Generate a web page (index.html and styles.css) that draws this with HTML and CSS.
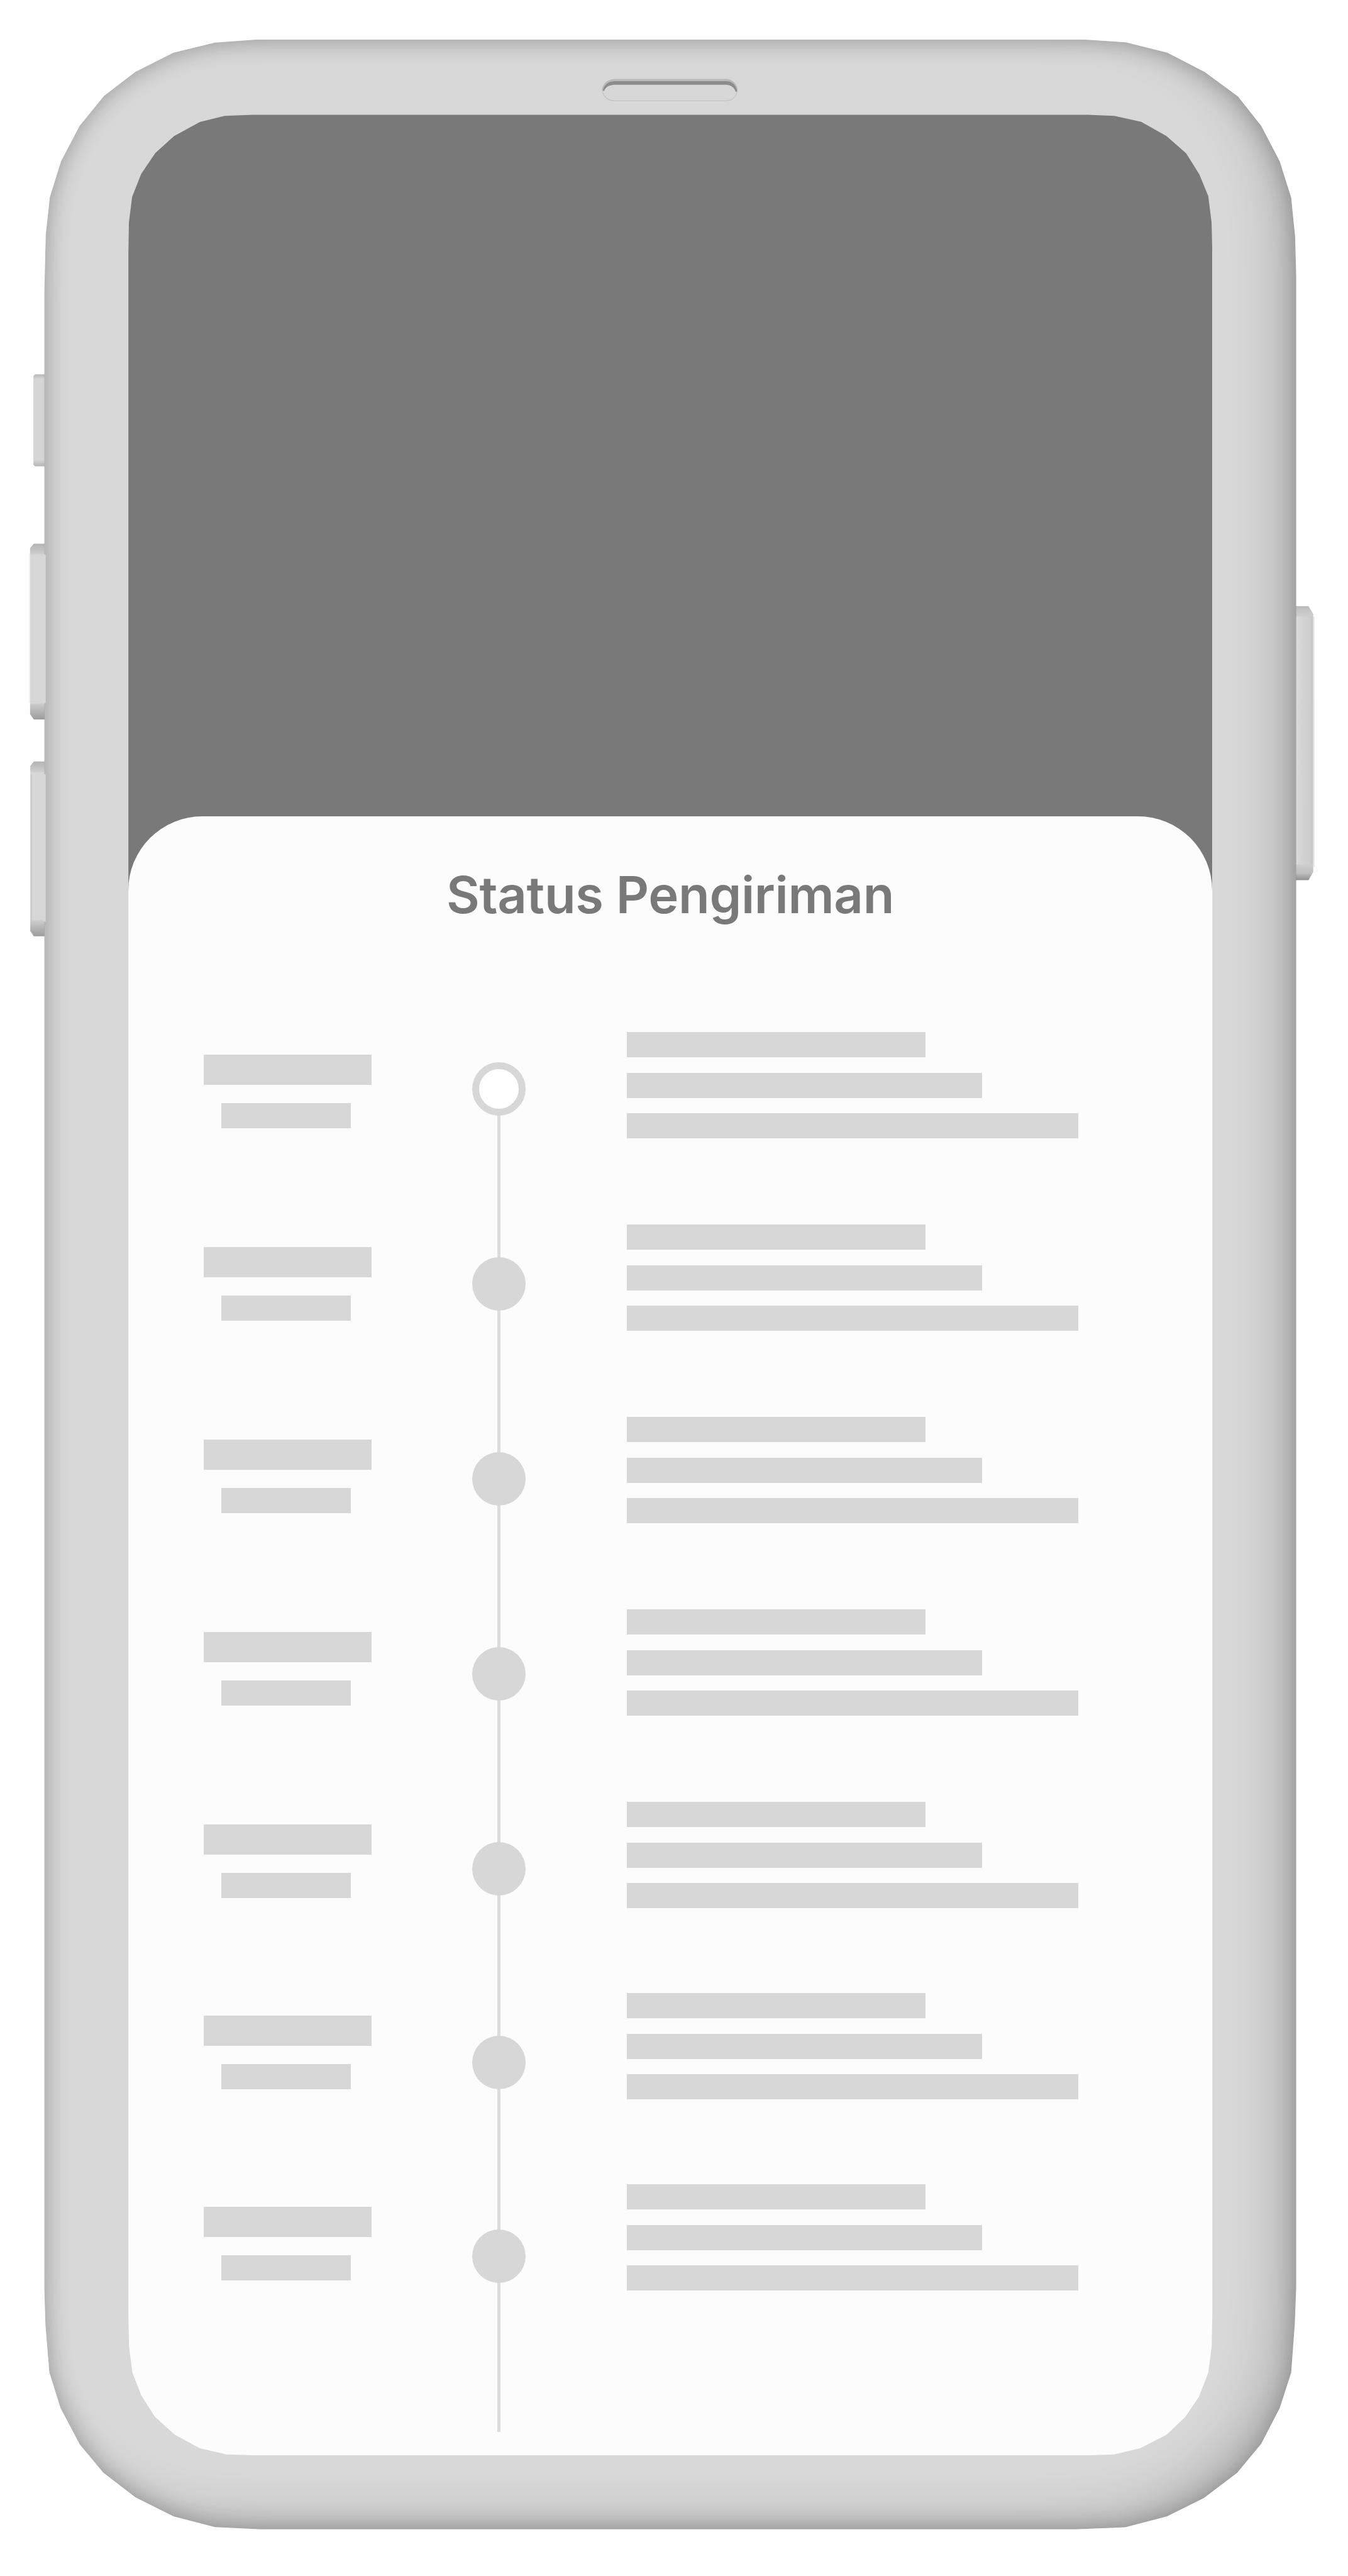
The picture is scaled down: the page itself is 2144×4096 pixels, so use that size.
FILE: index.html
```html
<!DOCTYPE html>
<html lang="id">
<head>
<meta charset="utf-8">
<title>Status Pengiriman</title>
<link rel="stylesheet" href="styles.css">
</head>
<body>
<div class="device">
  <main class="screen">
    <section class="sheet">
      <h1 class="title">Status Pengiriman</h1>
      <div class="timeline">
        <div class="dates">
          <div class="date"><i class="bar"></i><i class="bar time"></i></div>
          <div class="date"><i class="bar"></i><i class="bar time"></i></div>
          <div class="date"><i class="bar"></i><i class="bar time"></i></div>
          <div class="date"><i class="bar"></i><i class="bar time"></i></div>
          <div class="date"><i class="bar"></i><i class="bar time"></i></div>
          <div class="date"><i class="bar"></i><i class="bar time"></i></div>
          <div class="date"><i class="bar"></i><i class="bar time"></i></div>
        </div>
        <div class="track">
          <div class="step"><i class="dot current"></i></div>
          <div class="step"><i class="dot"></i></div>
          <div class="step"><i class="dot"></i></div>
          <div class="step"><i class="dot"></i></div>
          <div class="step"><i class="dot"></i></div>
          <div class="step"><i class="dot"></i></div>
          <div class="step"><i class="dot"></i></div>
        </div>
        <div class="details">
          <div class="detail"><i class="bar short"></i><i class="bar medium"></i><i class="bar long"></i></div>
          <div class="detail"><i class="bar short"></i><i class="bar medium"></i><i class="bar long"></i></div>
          <div class="detail"><i class="bar short"></i><i class="bar medium"></i><i class="bar long"></i></div>
          <div class="detail"><i class="bar short"></i><i class="bar medium"></i><i class="bar long"></i></div>
          <div class="detail"><i class="bar short"></i><i class="bar medium"></i><i class="bar long"></i></div>
          <div class="detail"><i class="bar short"></i><i class="bar medium"></i><i class="bar long"></i></div>
          <div class="detail"><i class="bar short"></i><i class="bar medium"></i><i class="bar long"></i></div>
        </div>
      </div>
    </section>
  </main>

  <svg class="frame" viewBox="0 0 2152 4112" preserveAspectRatio="none" aria-hidden="true">
    <defs>
      <path id="body" d="M408 63.3 L1733 63.3 L1797.5 67.5 L1863.6 84.2 L1923.3 115 L1976.5 154 L2013.5 201 L2043 257.5 L2061.3 315.5 L2067.6 378 L2069.3 440 L2069.3 3652 L2067 3711 L2061.3 3787.5 L2043 3844 L2013.5 3901 L1975 3947.3 L1922 3987.5 L1863 4017 L1796.5 4034.3 L1716 4037.5 L416 4037.5 L343 4034 L277.3 4017 L216 3986.3 L165 3947 L127.3 3902 L96.6 3843.7 L78.8 3787 L72.5 3711 L70.7 3652 L70.7 469 L73 375 L79.5 315 L97.4 257.5 L127 201 L166 153 L215.7 115 L277 84 L343 68 Z"/>
      <path id="outside" fill-rule="evenodd" d="M-400 -400 H2600 V4600 H-400 Z M408 63.3 L1733 63.3 L1797.5 67.5 L1863.6 84.2 L1923.3 115 L1976.5 154 L2013.5 201 L2043 257.5 L2061.3 315.5 L2067.6 378 L2069.3 440 L2069.3 3652 L2067 3711 L2061.3 3787.5 L2043 3844 L2013.5 3901 L1975 3947.3 L1922 3987.5 L1863 4017 L1796.5 4034.3 L1716 4037.5 L416 4037.5 L343 4034 L277.3 4017 L216 3986.3 L165 3947 L127.3 3902 L96.6 3843.7 L78.8 3787 L72.5 3711 L70.7 3652 L70.7 469 L73 375 L79.5 315 L97.4 257.5 L127 201 L166 153 L215.7 115 L277 84 L343 68 Z"/>
      <clipPath id="ring">
        <path clip-rule="evenodd" d="M408 63.3 L1733 63.3 L1797.5 67.5 L1863.6 84.2 L1923.3 115 L1976.5 154 L2013.5 201 L2043 257.5 L2061.3 315.5 L2067.6 378 L2069.3 440 L2069.3 3652 L2067 3711 L2061.3 3787.5 L2043 3844 L2013.5 3901 L1975 3947.3 L1922 3987.5 L1863 4017 L1796.5 4034.3 L1716 4037.5 L416 4037.5 L343 4034 L277.3 4017 L216 3986.3 L165 3947 L127.3 3902 L96.6 3843.7 L78.8 3787 L72.5 3711 L70.7 3652 L70.7 469 L73 375 L79.5 315 L97.4 257.5 L127 201 L166 153 L215.7 115 L277 84 L343 68 Z M404 183.3 L1736 183.3 L1779 185 L1822 194.6 L1862.4 217.4 L1893.6 244.6 L1914.8 278.5 L1928.9 313 L1934.2 355 L1935.4 404 L1935.4 3695 L1934.4 3746 L1928.8 3788 L1914 3826 L1892.3 3858 L1862.5 3886.4 L1820.5 3908 L1778.6 3918 L1737 3919.3 L404.7 3919.3 L361.7 3918 L318.6 3908 L279 3886.4 L247 3857.5 L225.6 3824 L211.4 3787.5 L206 3746 L205 3695 L205 402 L205.8 355 L211 314 L225.4 277.7 L248 244.2 L277.7 217.4 L319 194.8 L358.5 185 Z"/>
      </clipPath>
      <filter id="soft" filterUnits="userSpaceOnUse" x="-100" y="-100" width="2352" height="4312" color-interpolation-filters="sRGB"><feGaussianBlur stdDeviation="19"/></filter>
      <filter id="wide" filterUnits="userSpaceOnUse" x="-100" y="-100" width="2352" height="4312" color-interpolation-filters="sRGB"><feGaussianBlur stdDeviation="35"/></filter>
      <linearGradient id="keyA" x1="0" y1="0" x2="0" y2="1">
        <stop offset="0" stop-color="#b4b4b4"/><stop offset=".055" stop-color="#cbcbcb"/><stop offset=".065" stop-color="#d7d7d7"/>
        <stop offset=".905" stop-color="#d7d7d7"/><stop offset=".915" stop-color="#c9c9c9"/><stop offset="1" stop-color="#9c9c9c"/>
      </linearGradient>
      <linearGradient id="keyB" x1="0" y1="0" x2="0" y2="1">
        <stop offset="0" stop-color="#b8b8b8"/><stop offset=".05" stop-color="#d5d5d5"/>
        <stop offset=".93" stop-color="#d5d5d5"/><stop offset="1" stop-color="#b4b4b4"/>
      </linearGradient>
      <linearGradient id="power" x1="0" y1="0" x2="0" y2="1">
        <stop offset="0" stop-color="#b8b8b8"/><stop offset=".015" stop-color="#c5c5c5"/><stop offset=".045" stop-color="#d1d1d1"/>
        <stop offset=".94" stop-color="#d0d0d0"/><stop offset=".975" stop-color="#bdbdbd"/><stop offset="1" stop-color="#8f8f8f"/>
      </linearGradient>
      <linearGradient id="powerSide" x1="0" y1="0" x2="1" y2="0">
        <stop offset="0" stop-color="#fff" stop-opacity=".25"/><stop offset=".5" stop-color="#fff" stop-opacity="0"/><stop offset="1" stop-color="#000" stop-opacity=".06"/>
      </linearGradient>
    </defs>

    <path fill="url(#keyB)" d="M75 597.5 H56 L53.3 600 V742 L56 744.5 H75 Z"/>
    <path fill="url(#keyA)" d="M76 868 H54 L48 875 V1140 L54 1148.5 H76 Z"/>
    <path fill="#efefef" d="M46.5 884 H48.3 V1122 H46.5 Z"/>
    <path fill="url(#keyA)" d="M76 1215.5 H54 L48.3 1223 V1486 L54 1494.5 H76 Z"/>
    <path fill="#c9c9c9" d="M49 1236 H51 V1471 H49 Z"/>
    <path fill="url(#power)" d="M2064 967.5 H2089 L2096.5 980 V1392 L2089 1405 H2064 Z"/>
    <path fill="url(#powerSide)" d="M2069 984 H2096.5 V1380 H2069 Z"/>
    <path fill="#e4e4e4" d="M2096.5 984 H2098.5 V1384 H2096.5 Z"/>

    <g clip-path="url(#ring)">
      <use href="#body" fill="#d8d8d8"/>
      <use href="#outside" filter="url(#soft)" opacity=".28"/>
      <g filter="url(#wide)" opacity=".14"><use href="#outside" transform="translate(-40 -26)"/></g>
    </g>
    <path fill="#d7d7d7" d="M69 885 H73 V1122 H69 Z M69 1236 H73 V1471 H69 Z"/>

    <path fill="#d7d7d7" stroke="#c7c7c7" stroke-width="1.6" d="M980 127.5 H1160 C1170 128 1176.7 135 1176.7 144 C1176.7 153 1170 160.5 1160 160.8 H980 C970 160.5 961.8 153 961.8 144 C961.8 135 970 128 980 127.5 Z"/>
    <path fill="#b9b9b9" d="M961 144 C962 134 970 126.5 981 126 H1160 C1169 126.5 1177 134 1177.5 144 L1174 141 C1171 136 1166 134 1160 133 H981 C973 134 967 138 965 144 Z"/>
    <path fill="#8c8c8c" d="M962.5 145 C964 136 971 130 981 129.5 H1160 C1169 130 1175 136 1177 145.5 L1174.5 146.5 C1172 139 1167 136 1160 135.2 H981 C973 136 967 138 964.5 145 Z"/>
  </svg>
</div>
</body>
</html>
```
FILE: styles.css
```css
* {
  box-sizing: border-box;
}

body {
  margin: 0;
  background: #fff;
  font-family: Inter, "Liberation Sans", sans-serif;
}

/* The screen and the phone frame share one grid cell; the frame lies on top. */
.device {
  display: grid;
  width: 2144px;
  height: 4096px;
  overflow: hidden;
}

.screen,
.frame {
  grid-area: 1 / 1;
}

.frame {
  display: block;
  width: 2144px;
  height: 4096px;
}

.screen {
  width: 1724px;
  height: 3722px;
  margin: 182px 0 0 204px;
  padding-top: 1116px;
  background: #797979;
}

.sheet {
  height: 2606px;
  padding-top: 76px;
  border-radius: 118px 118px 0 0;
  background: #fcfcfc;
}

.title {
  margin: 0 0 169px;
  color: #797979;
  font-size: 81.3px;
  font-weight: 600;
  line-height: 98px;
  letter-spacing: -0.35px;
  text-align: center;
  white-space: nowrap;
}

.timeline {
  display: flex;
  align-items: flex-start;
  padding-left: 120px;
}

.bar {
  display: block;
  height: 40px;
  background: #d7d7d7;
}

.dates {
  width: 267px;
  padding-top: 36px;
}

.date {
  display: flex;
  flex-direction: column;
  gap: 29px;
  height: 306px;
}

.date .bar {
  height: 48px;
}

.date .time {
  width: 206px;
  height: 40px;
  margin-left: 28px;
}

.track {
  width: 86px;
  height: 2178px;
  margin: 48px 160px 0;
  background: linear-gradient(#dcdcdc, #dcdcdc) 40px 40px / 5px 100% no-repeat;
}

.step {
  height: 310px;
}

.dot {
  display: block;
  width: 85.4px;
  height: 85.4px;
  border-radius: 50%;
  background: #d7d7d7;
}

.dot.current {
  border: 11.5px solid #d7d7d7;
  background: #fefefe;
}

.detail {
  display: flex;
  flex-direction: column;
  gap: 24.3px;
  height: 306px;
}

.detail .bar {
  height: 40.3px;
}

.short {
  width: 475px;
}

.medium {
  width: 565px;
}

.long {
  width: 718px;
}

.date:nth-child(n + 5),
.detail:nth-child(n + 5) {
  height: 304px;
}

.step:nth-child(n + 5) {
  height: 308px;
}
```
